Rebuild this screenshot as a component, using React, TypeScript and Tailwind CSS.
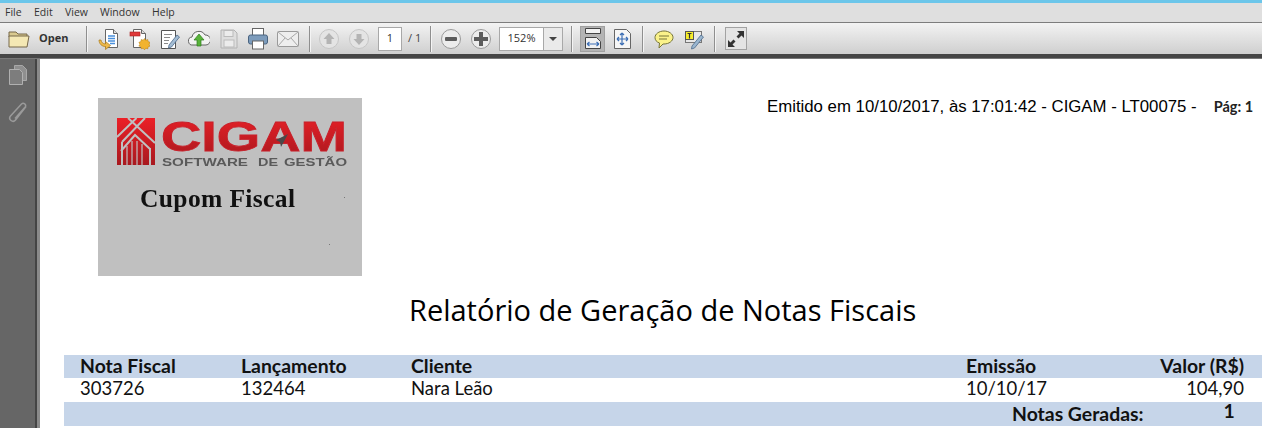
import type { ReactNode } from 'react'

const menu = ['File', 'Edit', 'View', 'Window', 'Help']

function Sep({ className }: { className: string }) {
  return <div className={`h-[26px] w-[2px] shrink-0 border-l border-[#8f8f8f] bg-[#f4f4f4] ${className}`} />
}

function Icon({ w, className, children }: { w: number; className: string; children: ReactNode }) {
  return (
    <svg width={w} height={24} viewBox={`0 0 ${w} 24`} className={`shrink-0 ${className}`}>
      {children}
    </svg>
  )
}

function RoundButton({ className, kind }: { className: string; kind: 'up' | 'down' | 'minus' | 'plus' }) {
  const disabled = kind === 'up' || kind === 'down'
  const glyph = disabled ? '#b4b4b4' : '#5c5c5c'
  return (
    <Icon w={20} className={className}>
      <circle cx="10" cy="12" r="9.5" fill={disabled ? '#e4e4e4' : '#ececec'} stroke={disabled ? '#c6c6c6' : '#9a9a9a'} />
      {kind === 'up' && <path d="M10 6l5.500 6H12.500v5h-5v-5H4.500z" fill={glyph} />}
      {kind === 'down' && <path d="M10 18l5.500-6H12.500V7h-5v5H4.500z" fill={glyph} />}
      {kind === 'minus' && <rect x="4" y="10" width="12" height="4" rx="1" fill={glyph} />}
      {kind === 'plus' && <path d="M8 5h4v5h5v4h-5v5H8v-5H3v-4h5z" fill={glyph} />}
    </Icon>
  )
}

function Toolbar() {
  return (
    <div className="flex h-[32px] items-center border-t border-[#7d7d7d] bg-gradient-to-b from-[#f3f3f3] to-[#cfcfcf] font-['Open_Sans',sans-serif]">
      <Icon w={22} className="ml-[8px]">
        <path d="M1 5h7l2 2h9v3H1z" fill="#d9c98f" stroke="#77684a" />
        <path d="M1 20V9h20l-2 11z" fill="#f4e8b4" stroke="#77684a" />
      </Icon>
      <span className="ml-[9px] w-[30px] text-[11px] font-bold text-[#333]">Open</span>
      <Sep className="ml-[17px]" />

      <Icon w={21} className="ml-[10px]">
        <path d="M7.500 2.500h8l4 4v14h-12z" fill="#fff" stroke="#666" />
        <path d="M15.500 2.500v4h4" fill="#ddd" stroke="#666" />
        <path d="M10 9h7M10 11.500h7M10 14h7M12 16.500h5" stroke="#4a90dc" strokeWidth="1.300" />
        <path d="M1 13c0 4 3 6.500 6.500 6.500V22.500l5-4-5-4V17c-2.500 0-4-1.500-4.500-4z" fill="#eeb94a" stroke="#a87a1c" strokeWidth=".7" />
      </Icon>
      <Icon w={21} className="ml-[10px]">
        <path d="M4.500 2.500h8l4 4v14h-12z" fill="#fff" stroke="#666" />
        <path d="M12.500 2.500v4h4" fill="#ddd" stroke="#666" />
        <rect x="1" y="5" width="10" height="4" fill="#e0393a" stroke="#a82020" strokeWidth=".6" />
        <path d="M15.500 11.500l1.300 1.700 2-.7.300 2.100 2 .7-1 1.900 1 1.900-2 .7-.3 2.100-2-.7-1.300 1.700-1.300-1.700-2 .7-.3-2.100-2-.7 1-1.900-1-1.900 2-.7.3-2.100 2 .7z" fill="#f2b32e" stroke="#b57c10" strokeWidth=".5" />
      </Icon>
      <Icon w={20} className="ml-[10px]">
        <path d="M1.500 3.500h14v18h-14z" fill="#fff" stroke="#555" />
        <path d="M4 7.500h8M4 10.500h6M4 13.500h5M4 16.500h4" stroke="#8a8a8a" />
        <path d="M9 18l8-10 2.500 2-8 10-3 1z" fill="#a4bdd4" stroke="#4c6a8a" strokeWidth=".8" />
      </Icon>
      <Icon w={22} className="ml-[8px]">
        <path d="M5 18a4 4 0 0 1-1-8 7 7 0 0 1 13-2 5 5 0 0 1 1 10z" fill="#f3f3f3" stroke="#666" />
        <path d="M11 7l5 6h-3v6H9v-6H6z" fill="#58b33a" stroke="#2f7d1e" strokeWidth=".7" />
      </Icon>
      <Icon w={18} className="ml-[10px]">
        <path d="M1 3h13l3 3v15H1z" fill="#dedede" stroke="#b2b2b2" />
        <rect x="4" y="3.500" width="9" height="6" fill="#ececec" stroke="#bbb" />
        <rect x="4" y="13" width="10" height="7" fill="#ececec" stroke="#bbb" />
      </Icon>
      <Icon w={20} className="ml-[10px]">
        <rect x="4.500" y="1.500" width="11" height="7" fill="#fff" stroke="#666" />
        <rect x=".5" y="8" width="19" height="9" rx="2" fill="#7d9cbc" stroke="#4a6480" />
        <rect x="4.500" y="14" width="11" height="8" fill="#fff" stroke="#666" />
      </Icon>
      <Icon w={22} className="ml-[9px]">
        <rect x=".5" y="4.500" width="21" height="15" rx="1" fill="#eeeeee" stroke="#9a9a9a" />
        <path d="M1 5l10 8 10-8M1 19l7-8M21 19l-7-8" fill="none" stroke="#a8a8a8" />
      </Icon>
      <Sep className="ml-[10px]" />

      <RoundButton kind="up" className="ml-[8px]" />
      <RoundButton kind="down" className="ml-[10px]" />
      <div className="ml-[9px] flex h-[24px] w-[24px] items-center justify-center border border-[#a8a8a8] bg-white text-[11px] text-[#333]">
        1
      </div>
      <span className="ml-[6px] w-[23px] text-[11px] text-[#444]">/ 1</span>
      <Sep className="ml-[-1px]" />

      <RoundButton kind="minus" className="ml-[9px]" />
      <RoundButton kind="plus" className="ml-[10px]" />
      <div className="ml-[8px] flex h-[24px] w-[64px] items-stretch border border-[#a8a8a8] bg-white text-[11px] text-[#333]">
        <div className="flex flex-1 items-center justify-center">152%</div>
        <div className="flex w-[19px] items-center justify-center border-l border-[#a8a8a8] bg-[#eaeaea]">
          <div className="h-0 w-0 border-x-[4px] border-t-[4px] border-x-transparent border-t-[#444]" />
        </div>
      </div>
      <Sep className="ml-[8px]" />

      <div className="ml-[7px] flex h-[26px] w-[25px] shrink-0 items-center justify-center border border-[#a0a0a0] bg-[#b4b4b4]">
        <svg width="16" height="21" viewBox="0 0 16 21">
          <path d="M.5.5h15v5H.5z" fill="#f2f2f2" stroke="#444" />
          <path d="M.5 9.500h11l4 4v7H.5z" fill="#f2f2f2" stroke="#444" />
          <path d="M2 16h12M2 16l2.500-2M2 16l2.500 2M14 16l-2.500-2M14 16l-2.500 2" fill="none" stroke="#3d6fb5" strokeWidth="1.200" />
        </svg>
      </div>
      <Icon w={17} className="ml-[9px]">
        <path d="M.5 2.500h12l4 4v15H.5z" fill="#f6f6f6" stroke="#666" />
        <path d="M8 6v12M3 12h11M8 6l-2 2M8 6l2 2M8 18l-2-2M8 18l2-2M3 12l2-2M3 12l2 2M14 12l-2-2M14 12l-2 2" fill="none" stroke="#3d6fb5" strokeWidth="1.200" />
      </Icon>
      <Sep className="ml-[11px]" />

      <Icon w={20} className="ml-[10px]">
        <path d="M10 4c5 0 9 3 9 6.500S15 17 10 17l-1 0-4 4 .5-5C2.500 15 1 13 1 10.500 1 7 5 4 10 4z" fill="#faf28a" stroke="#77763a" />
        <path d="M5 9h10M5 12h8" stroke="#77763a" />
      </Icon>
      <Icon w={20} className="ml-[10px]">
        <rect x="1.500" y="4.500" width="16" height="11" fill="#e8e8e8" stroke="#777" />
        <rect x="1.500" y="4.500" width="8" height="8" fill="#f7ee2a" stroke="#555" />
        <path d="M3.500 6.500h4M5.500 6.500v5" stroke="#333" strokeWidth="1.200" />
        <path d="M8 19l9-11 2.500 2-9 11-3 1z" fill="#9ab6cf" stroke="#4c6a8a" strokeWidth=".8" />
      </Icon>
      <Sep className="ml-[10px]" />

      <div className="ml-[9px] flex h-[23px] w-[22px] shrink-0 items-center justify-center border border-[#a2a2a2] bg-[#e4e4e4]">
        <svg width="18" height="18" viewBox="0 0 18 18">
          <path d="M10 1h7v7l-2.500-2.500-3 3-2-2 3-3zM1 17v-7l2.500 2.500 3-3 2 2-3 3L8 17z" fill="#333" />
        </svg>
      </div>
    </div>
  )
}

function CigamLogo() {
  return (
    <svg width="264" height="178" viewBox="0 0 264 178" className="shrink-0 bg-[#c0c0c0]">
      <defs>
        <linearGradient id="cigamRed" x1="0" y1="0" x2="0" y2="1">
          <stop offset="0" stopColor="#ec2027" />
          <stop offset="1" stopColor="#a8191f" />
        </linearGradient>
      </defs>
      <g className="blur-[0.4px]">
        <rect x="19" y="20" width="38" height="47" fill="url(#cigamRed)" />
        <path d="M38.500 20L19 39M30 20l27 25M47 20L24 44M24 44l0 23M52 50l0 17" fill="none" stroke="#c0c0c0" strokeWidth="2" />
        <path d="M23 53l14-16 15 14" fill="none" stroke="#c0c0c0" strokeWidth="2" />
        <path d="M29 67V48M34 67V43M39 67V43M44 67V46" stroke="#c0c0c0" strokeWidth="1.200" />
        <text x="63" y="53" fontFamily="'Liberation Sans',sans-serif" fontWeight="700" fontSize="43" textLength="186" lengthAdjust="spacingAndGlyphs" stroke="#c8202a" strokeWidth=".8" fill="url(#cigamRed)">
          CIGAM
        </text>
        <path d="M178 42l12-6-7 13-1-5z" fill="#4a4a4a" />
        <g fontFamily="'Liberation Sans',sans-serif" fontWeight="700" fontSize="11.500" fill="#5a5a5a">
          <text x="64" y="68" textLength="86" lengthAdjust="spacingAndGlyphs">SOFTWARE</text>
          <text x="160" y="68" textLength="20" lengthAdjust="spacingAndGlyphs">DE</text>
          <text x="186" y="68" textLength="63" lengthAdjust="spacingAndGlyphs">GESTÃO</text>
        </g>
        <text x="42" y="109" fontFamily="'Liberation Serif',serif" fontWeight="700" fontSize="25.500" textLength="155" fill="#111">
          Cupom Fiscal
        </text>
      </g>
      <rect x="246" y="99" width="1" height="1" fill="#777" />
      <rect x="231" y="146" width="1" height="1" fill="#777" />
    </svg>
  )
}

const cols = 'grid grid-cols-[161px_170px_555px_1fr_auto]'

export default function App() {
  return (
    <div className="flex h-[428px] w-[1262px] flex-col overflow-hidden bg-white">
      <div className="h-[3px] bg-[#6cc6ea]" />
      <div className="flex h-[19px] items-center bg-[#dfdfdf] pl-[5px] font-['Open_Sans',sans-serif] text-[10.5px] text-[#333]">
        <span className="w-[29px]">{menu[0]}</span>
        <span className="w-[31px]">{menu[1]}</span>
        <span className="w-[35px]">{menu[2]}</span>
        <span className="w-[52px]">{menu[3]}</span>
        <span>{menu[4]}</span>
      </div>
      <Toolbar />
      <div className="h-[5px] border-b border-[#777] bg-[#454545]" />

      <div className="flex min-h-0 flex-1">
        <div className="flex w-[40px] shrink-0 border-r-[3px] border-[#8a8a8a]">
          <div className="flex w-[37px] flex-col items-center gap-[17px] border-r-2 border-[#444] bg-[#666] pt-[6px]">
            <svg width="18" height="20" viewBox="0 0 18 20">
              <path d="M5.500.5h8l4 4v11h-12z" fill="#8f8f8f" stroke="#a8a8a8" />
              <path d="M.5 4.500h10l3 3v12H.5z" fill="#7d7d7d" stroke="#b0b0b0" />
            </svg>
            <svg width="20" height="22" viewBox="0 0 20 22">
              <path d="M18 4.500L7.500 18a3.200 3.200 0 0 1-5-4L13.500 2a2.400 2.400 0 0 1 3.700 3L7 16.500" fill="none" stroke="#9a9a9a" strokeWidth="1.500" />
            </svg>
          </div>
        </div>

        <div className="flex min-w-0 flex-1 flex-col">
          <div className="flex">
            <div className="ml-[58px] mt-[39px]">
              <CigamLogo />
            </div>
            <div className="ml-[405px] mt-[38px] font-['Liberation_Sans',sans-serif] text-[16.8px] leading-[20px] whitespace-nowrap text-black">
              Emitido em 10/10/2017, às 17:01:42 - CIGAM - LT00075 -
            </div>
            <div className="ml-[17px] mt-[38px] font-['Lato',sans-serif] text-[14.5px] leading-[20px] font-bold whitespace-nowrap text-[#222]">
              Pág: 1
            </div>
          </div>

          <h1 className="mt-[15px] ml-[369px] font-['Open_Sans',sans-serif] text-[29px] leading-[38px] whitespace-nowrap text-black">
            Relatório de Geração de Notas Fiscais
          </h1>

          <div className="ml-[24px] mt-[26px] font-['Lato',sans-serif] text-[18.5px] text-[#111]">
            <div className={`${cols} h-[23px] bg-[#c6d5e9] pl-[16px] pr-[18px] text-[19.4px] font-bold leading-[21px]`}>
              <span>Nota Fiscal</span>
              <span>Lançamento</span>
              <span>Cliente</span>
              <span>Emissão</span>
              <span>Valor (R$)</span>
            </div>
            <div className={`${cols} h-[24px] pl-[16px] pr-[18px] leading-[21px]`}>
              <span>303726</span>
              <span>132464</span>
              <span>Nara Leão</span>
              <span>10/10/17</span>
              <span>104,90</span>
            </div>
            <div className="flex h-[24px] items-start bg-[#c6d5e9] text-[19.4px] font-bold leading-[23px]">
              <span className="ml-[948px]">Notas Geradas:</span>
              <span className="ml-[80px] -mt-[3px]">1</span>
            </div>
          </div>
        </div>
      </div>
    </div>
  )
}
